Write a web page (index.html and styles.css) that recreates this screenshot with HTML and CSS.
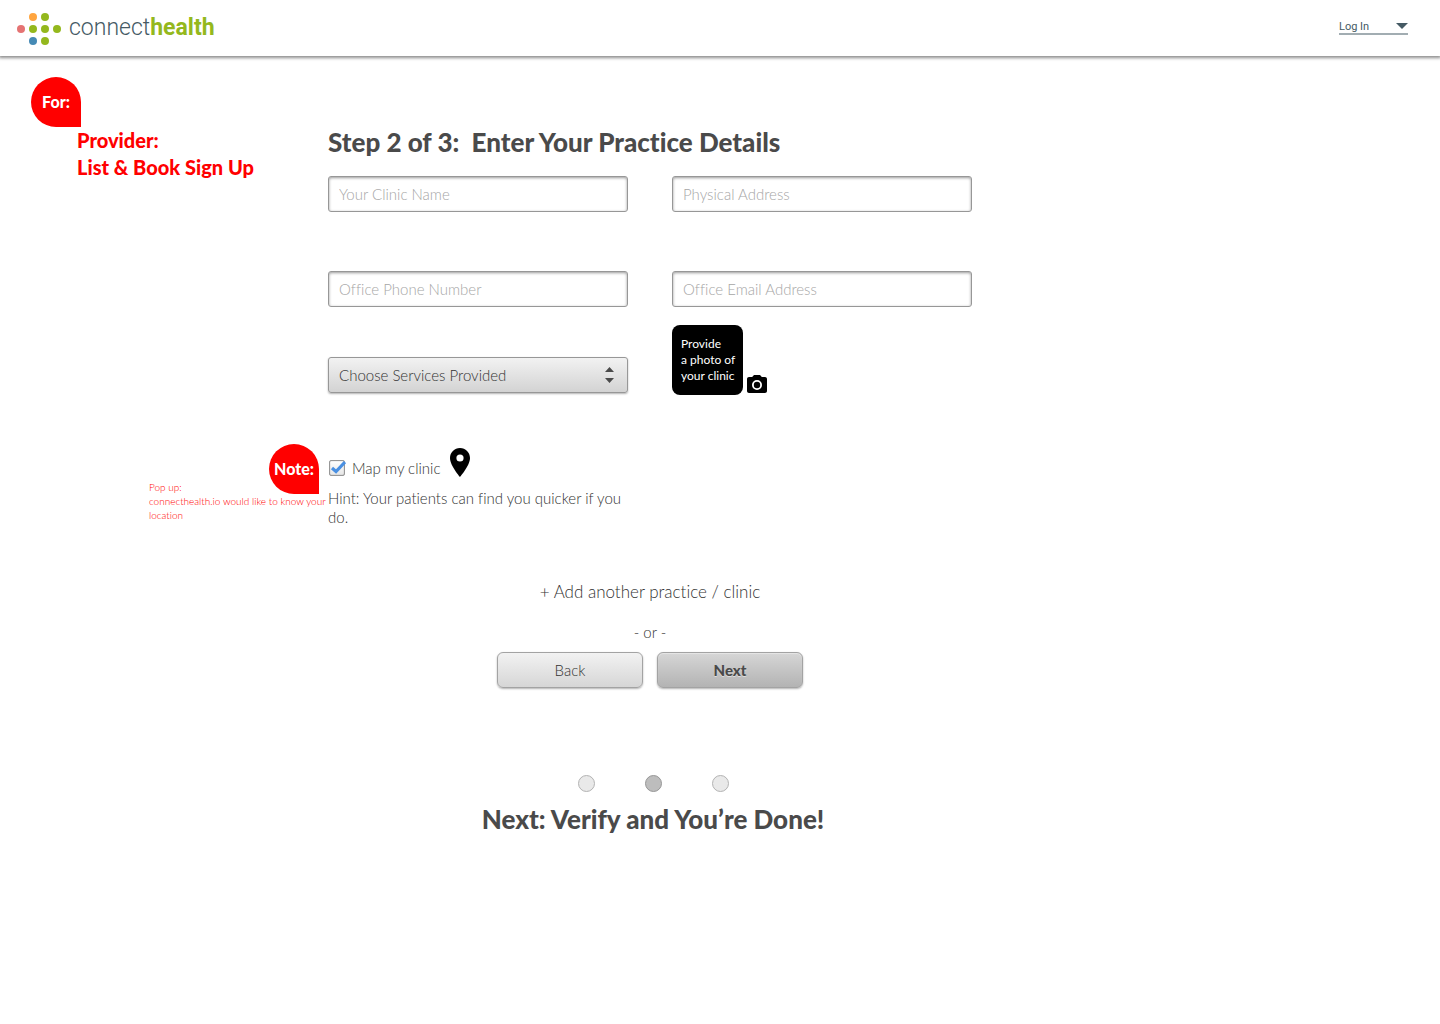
FILE: index.html
```html
<!DOCTYPE html>
<html lang="en">
<head>
<meta charset="utf-8">
<meta name="viewport" content="width=device-width, initial-scale=1">
<title>connecthealth – Practice Details</title>
<link rel="stylesheet" href="styles.css">
</head>
<body>
<header class="topbar">
  <a class="logo" href="#">
    <svg class="logo-mark" width="44" height="32" viewBox="0 0 44 32" aria-hidden="true">
      <circle cx="16" cy="4" r="4" fill="#ffa53f"/>
      <circle cx="28" cy="4" r="4" fill="#94b81d"/>
      <circle cx="4" cy="16" r="4" fill="#e57373"/>
      <circle cx="16" cy="16" r="4" fill="#94b81d"/>
      <circle cx="28" cy="16" r="4" fill="#94b81d"/>
      <circle cx="40" cy="16" r="4" fill="#94b81d"/>
      <circle cx="16" cy="28" r="4" fill="#458ab5"/>
      <circle cx="28" cy="28" r="4" fill="#94b81d"/>
    </svg>
    <span class="logo-name">connect<b>health</b></span>
  </a>
  <button class="login" type="button" aria-haspopup="menu">
    <span>Log In</span>
    <svg width="12" height="6" viewBox="0 0 12 6" aria-hidden="true"><path d="M0 0h12L6 6z" fill="#455a64"/></svg>
  </button>
</header>

<main class="page">
  <aside class="notes">
    <div class="note">
      <span class="badge">For:</span>
      <p class="note-title">Provider:<br>List &amp; Book Sign Up</p>
    </div>
    <div class="note note-popup">
      <span class="badge">Note:</span>
      <p class="note-text">Pop up:<br>connecthealth.io would like to know your location</p>
    </div>
  </aside>

  <form class="practice">
    <h1 class="title">Step 2 of 3:&nbsp; Enter Your Practice Details</h1>
    <div class="fields">
      <input class="field" type="text" placeholder="Your Clinic Name" aria-label="Your Clinic Name">
      <input class="field" type="text" placeholder="Physical Address" aria-label="Physical Address">
      <input class="field" type="tel" placeholder="Office Phone Number" aria-label="Office Phone Number">
      <input class="field" type="email" placeholder="Office Email Address" aria-label="Office Email Address">
    </div>

    <div class="extras">
      <div class="select-wrap">
        <select class="select" aria-label="Services provided">
          <option>Choose Services Provided</option>
        </select>
        <svg class="select-arrows" width="9" height="16" viewBox="0 0 9 16" aria-hidden="true"><path d="M0 5L4.500 0L9 5zM0 11h9L4.500 16z" fill="#4a4a4a"/></svg>
      </div>
      <button class="photo" type="button">
        <span class="photo-box">Provide<br>a photo of<br>your clinic</span>
        <svg class="camera" width="20" height="18" viewBox="2 2 20 18" aria-hidden="true">
          <path fill-rule="evenodd" d="M9 2L7.170 4H4c-1.100 0-2 .9-2 2v12c0 1.100.9 2 2 2h16c1.100 0 2-.9 2-2V6c0-1.100-.9-2-2-2h-3.170L15 2zM12 17a5 5 0 1 1 0-10a5 5 0 0 1 0 10zM12 15.200a3.200 3.200 0 1 0 0-6.400a3.200 3.200 0 0 0 0 6.400z"/>
        </svg>
      </button>
    </div>

    <div class="map-row">
      <label class="check">
        <span class="check-box">
          <input type="checkbox" checked>
          <svg width="18" height="17" viewBox="0 0 18 17" aria-hidden="true"><path d="M4 8L8 11.500L17 2" fill="none" stroke="#4a90e2" stroke-width="3.200"/></svg>
        </span>
        Map my clinic
      </label>
      <svg width="20" height="29" viewBox="0 0 20 29" aria-hidden="true">
        <path fill-rule="evenodd" d="M10 0C4.400 0 0 4.500 0 10c0 7.500 10 19 10 19s10-11.500 10-19C20 4.500 15.600 0 10 0zM10 13.600a3.600 3.600 0 1 1 0-7.200a3.600 3.600 0 0 1 0 7.200z"/>
      </svg>
    </div>
    <p class="hint">Hint: Your patients can find you quicker if you do.</p>

    <div class="actions">
      <a class="add" href="#">+ Add another practice / clinic</a>
      <span class="or">- or -</span>
      <div class="buttons">
        <button class="btn" type="button">Back</button>
        <button class="btn btn-primary" type="submit">Next</button>
      </div>
    </div>

    <div class="progress">
      <div class="dots" role="img" aria-label="Step 2 of 3">
        <span class="dot"></span>
        <span class="dot dot-current"></span>
        <span class="dot"></span>
      </div>
      <h2 class="title">Next: Verify and You’re Done!</h2>
    </div>
  </form>
</main>
</body>
</html>
```
FILE: styles.css
```css
* {
  box-sizing: border-box;
}

body {
  margin: 0;
  background: #fff;
  color: #333;
  font: 300 15px/20px Lato, sans-serif;
  font-variant-ligatures: none;
}

h1, h2, p {
  margin: 0;
}

button, input, select {
  font: inherit;
  color: inherit;
}

.topbar {
  display: flex;
  align-items: center;
  justify-content: space-between;
  height: 56px;
  padding: 0 32px 0 17px;
  background: #fff;
  box-shadow: 0 1px 3px 1px rgba(0, 0, 0, 0.45);
}

.logo {
  display: flex;
  align-items: center;
  gap: 8px;
  color: #455a64;
  text-decoration: none;
}

.logo-mark {
  margin-top: 2px;
}

.logo-name {
  font: 300 23px/32px Roboto, sans-serif;
}

.logo-name b {
  color: #94b81d;
  font-weight: 700;
}

.login {
  display: flex;
  align-items: center;
  justify-content: space-between;
  width: 69px;
  margin-bottom: 2px;
  padding: 0;
  border: 0;
  border-bottom: 2px solid #a2adb2;
  background: none;
  color: #455a64;
  font: 11px/13px Roboto, sans-serif;
}

.page {
  display: grid;
  grid-template-columns: 328px minmax(0, 644px);
  padding: 21px 0 40px;
}

.notes {
  display: flex;
  flex-direction: column;
  gap: 263px;
  color: #f00;
}

.badge {
  display: grid;
  place-items: center;
  width: 50px;
  height: 50px;
  border-radius: 50% 50% 0 50%;
  background: #f00;
  color: #fff;
  font-size: 16px;
  font-weight: 900;
}

.note {
  padding-left: 31px;
}

.note-title {
  padding-left: 46px;
  font-size: 20px;
  font-weight: 900;
  line-height: 27px;
}

.note-popup {
  padding: 0 0 0 149px;
}

.note-popup .badge {
  margin-left: 120px;
}

.note-text {
  margin-top: -14px;
  font-size: 10px;
  line-height: 14px;
}

.practice {
  padding-top: 49px;
}

.title {
  color: #4a4a4a;
  font-size: 26px;
  font-weight: 900;
  line-height: 32px;
}

.fields {
  display: grid;
  grid-template-columns: 1fr 1fr;
  gap: 59px 44px;
  margin-top: 18px;
}

.field {
  width: 100%;
  height: 36px;
  padding: 0 10px;
  border: 1px solid #979797;
  border-radius: 3px;
  background: #fff;
  box-shadow: inset 0 1px 3px rgba(0, 0, 0, 0.4);
}

.field::placeholder {
  color: #a6a6a6;
  opacity: 1;
}

.extras {
  display: grid;
  grid-template-columns: 1fr 1fr;
  gap: 44px;
  align-items: end;
  margin-top: 18px;
}

.select-wrap {
  display: grid;
  align-items: center;
  padding-bottom: 2px;
}

.select {
  grid-area: 1 / 1;
  width: 100%;
  height: 36px;
  padding: 0 10px;
  border: 1px solid #979797;
  border-radius: 3px;
  background: linear-gradient(#f2f2f2, #d3d3d3);
  box-shadow: 0 1px 2px rgba(0, 0, 0, 0.3);
  appearance: none;
}

.select-arrows {
  grid-area: 1 / 1;
  justify-self: end;
  margin-right: 14px;
  pointer-events: none;
}

.photo {
  display: flex;
  align-items: flex-end;
  justify-self: start;
  gap: 4px;
  padding: 0;
  border: 0;
  background: none;
  text-align: left;
}

.photo-box {
  display: grid;
  align-items: center;
  width: 71px;
  height: 70px;
  padding-left: 9px;
  border-radius: 8px;
  background: #000;
  color: #fff;
  font-size: 12px;
  font-weight: 400;
  line-height: 16px;
}

.camera {
  margin-bottom: 2px;
}

.map-row {
  display: flex;
  align-items: flex-end;
  gap: 9px;
  margin-top: 53px;
}

.check {
  display: flex;
  align-items: center;
  gap: 6px;
  line-height: 17px;
}

.check-box {
  display: grid;
}

.check-box input {
  grid-area: 1 / 1;
  width: 16px;
  height: 16px;
  margin: 0 1px;
  border: 1px solid #979797;
  border-radius: 2px;
  background: linear-gradient(#fff, #e6e6e6);
  box-shadow: inset 0 0 1px rgba(0, 0, 0, 0.5);
  appearance: none;
}

.check-box svg {
  grid-area: 1 / 1;
  pointer-events: none;
}

.hint {
  max-width: 300px;
  margin-top: 12px;
  line-height: 19px;
}

.actions {
  display: flex;
  flex-direction: column;
  align-items: center;
  margin-top: 53px;
}

.add {
  color: inherit;
  font-size: 17px;
  line-height: 24px;
  text-decoration: none;
}

.or {
  margin-top: 18px;
}

.buttons {
  display: flex;
  gap: 14px;
  margin-top: 10px;
}

.btn {
  width: 146px;
  height: 36px;
  border: 1px solid #a3a3a3;
  border-radius: 6px;
  background: linear-gradient(#f2f2f2, #d6d6d6);
  box-shadow: 0 1px 2px rgba(0, 0, 0, 0.3);
}

.btn-primary {
  background: linear-gradient(#d6d6d6, #b3b3b3);
  box-shadow: inset 0 1px 1px rgba(255, 255, 255, 0.4), 0 1px 2px rgba(0, 0, 0, 0.3);
  color: #4a4a4a;
  font-weight: 900;
  text-shadow: 0 1px 0 rgba(255, 255, 255, 0.5);
}

.progress {
  display: flex;
  flex-direction: column;
  align-items: center;
  gap: 11px;
  margin-top: 87px;
  padding-left: 6px;
}

.dots {
  display: flex;
  gap: 50px;
}

.dot {
  width: 17px;
  height: 17px;
  border: 1px solid #b3b3b3;
  border-radius: 50%;
  background: #e9e9e9;
}

.dot-current {
  border-color: #979797;
  background: #bdbdbd;
}
```
